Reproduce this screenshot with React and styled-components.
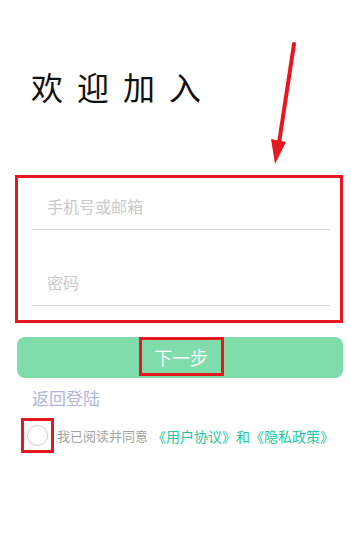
import React from "react";
import styled, { createGlobalStyle } from "styled-components";

const Global = createGlobalStyle`
  html, body { margin: 0; padding: 0; background: #fff; }
  body { font-family: "Noto Sans CJK SC", "Noto Sans", sans-serif; }
  * { box-sizing: border-box; }
`;

const RED = "#e8161e";

const Page = styled.div`
  position: relative;
  width: 351px;
  height: 554px;
  padding: 0 8px 0 15px;
  overflow: hidden;
`;

const Title = styled.h1`
  margin: 0;
  padding: 69px 0 0 16px;
  font-size: 32px;
  line-height: 35px;
  font-weight: 400;
  letter-spacing: 14px;
  color: #111;
`;

const Arrow = styled.svg`
  position: absolute;
  left: 260px;
  top: 35px;
`;

const FormBox = styled.div`
  margin-top: 71px;
  border: 3px solid ${RED};
  height: 148px;
  padding: 7px 10px 0 14px;
  display: flex;
  flex-direction: column;
  gap: 31px;
`;

const Field = styled.div`
  height: 45px;
  border-bottom: 1px solid #d6d6d6;
  display: flex;
  align-items: center;
  padding: 0 0 2px 15px;
  font-size: 16px;
  color: #c9c9c9;
`;

const Button = styled.div`
  margin-top: 14px;
  margin-left: 2px;
  height: 41px;
  border-radius: 8px;
  background: #80ddab;
  display: flex;
  justify-content: center;
  align-items: flex-start;
`;

const ButtonLabel = styled.span`
  margin-left: 2px;
  height: 39px;
  width: 85px;
  border: 3px solid ${RED};
  display: flex;
  align-items: center;
  justify-content: center;
  color: #fff;
  font-size: 18px;
`;

const BackLink = styled.div`
  margin: 8px 0 0 17px;
  font-size: 17px;
  line-height: 24px;
  color: #aeb6dc;
`;

const AgreeRow = styled.div`
  margin-top: 8px;
  display: flex;
  align-items: center;
`;

const CheckWrap = styled.div`
  margin-left: 6px;
  width: 33px;
  height: 35px;
  border: 3px solid ${RED};
  display: flex;
  align-items: center;
  justify-content: center;
`;

const Circle = styled.span`
  width: 21px;
  height: 21px;
  border-radius: 50%;
  border: 1px solid #cfcfcf;
`;

const AgreeText = styled.span`
  margin-left: 3px;
  font-size: 13px;
  color: #a3a3a3;
`;

const Link = styled.span`
  margin-left: 4px;
  font-size: 14px;
  color: #22c8a0;
`;

export default function App() {
  return (
    <>
      <Global />
      <Page>
        <Title>欢迎加入</Title>
        <FormBox>
          <Field>手机号或邮箱</Field>
          <Field>密码</Field>
        </FormBox>
        <Button>
          <ButtonLabel>下一步</ButtonLabel>
        </Button>
        <BackLink>返回登陆</BackLink>
        <AgreeRow>
          <CheckWrap>
            <Circle />
          </CheckWrap>
          <AgreeText>我已阅读并同意</AgreeText>
          <Link>《用户协议》和《隐私政策》</Link>
        </AgreeRow>
        <Arrow width="45" height="135" viewBox="0 0 45 135">
          <line x1="34" y1="9" x2="19" y2="108" stroke={RED} strokeWidth="4" strokeLinecap="round" />
          <polygon points="11,104 26,107 15,129" fill={RED} />
        </Arrow>
      </Page>
    </>
  );
}
